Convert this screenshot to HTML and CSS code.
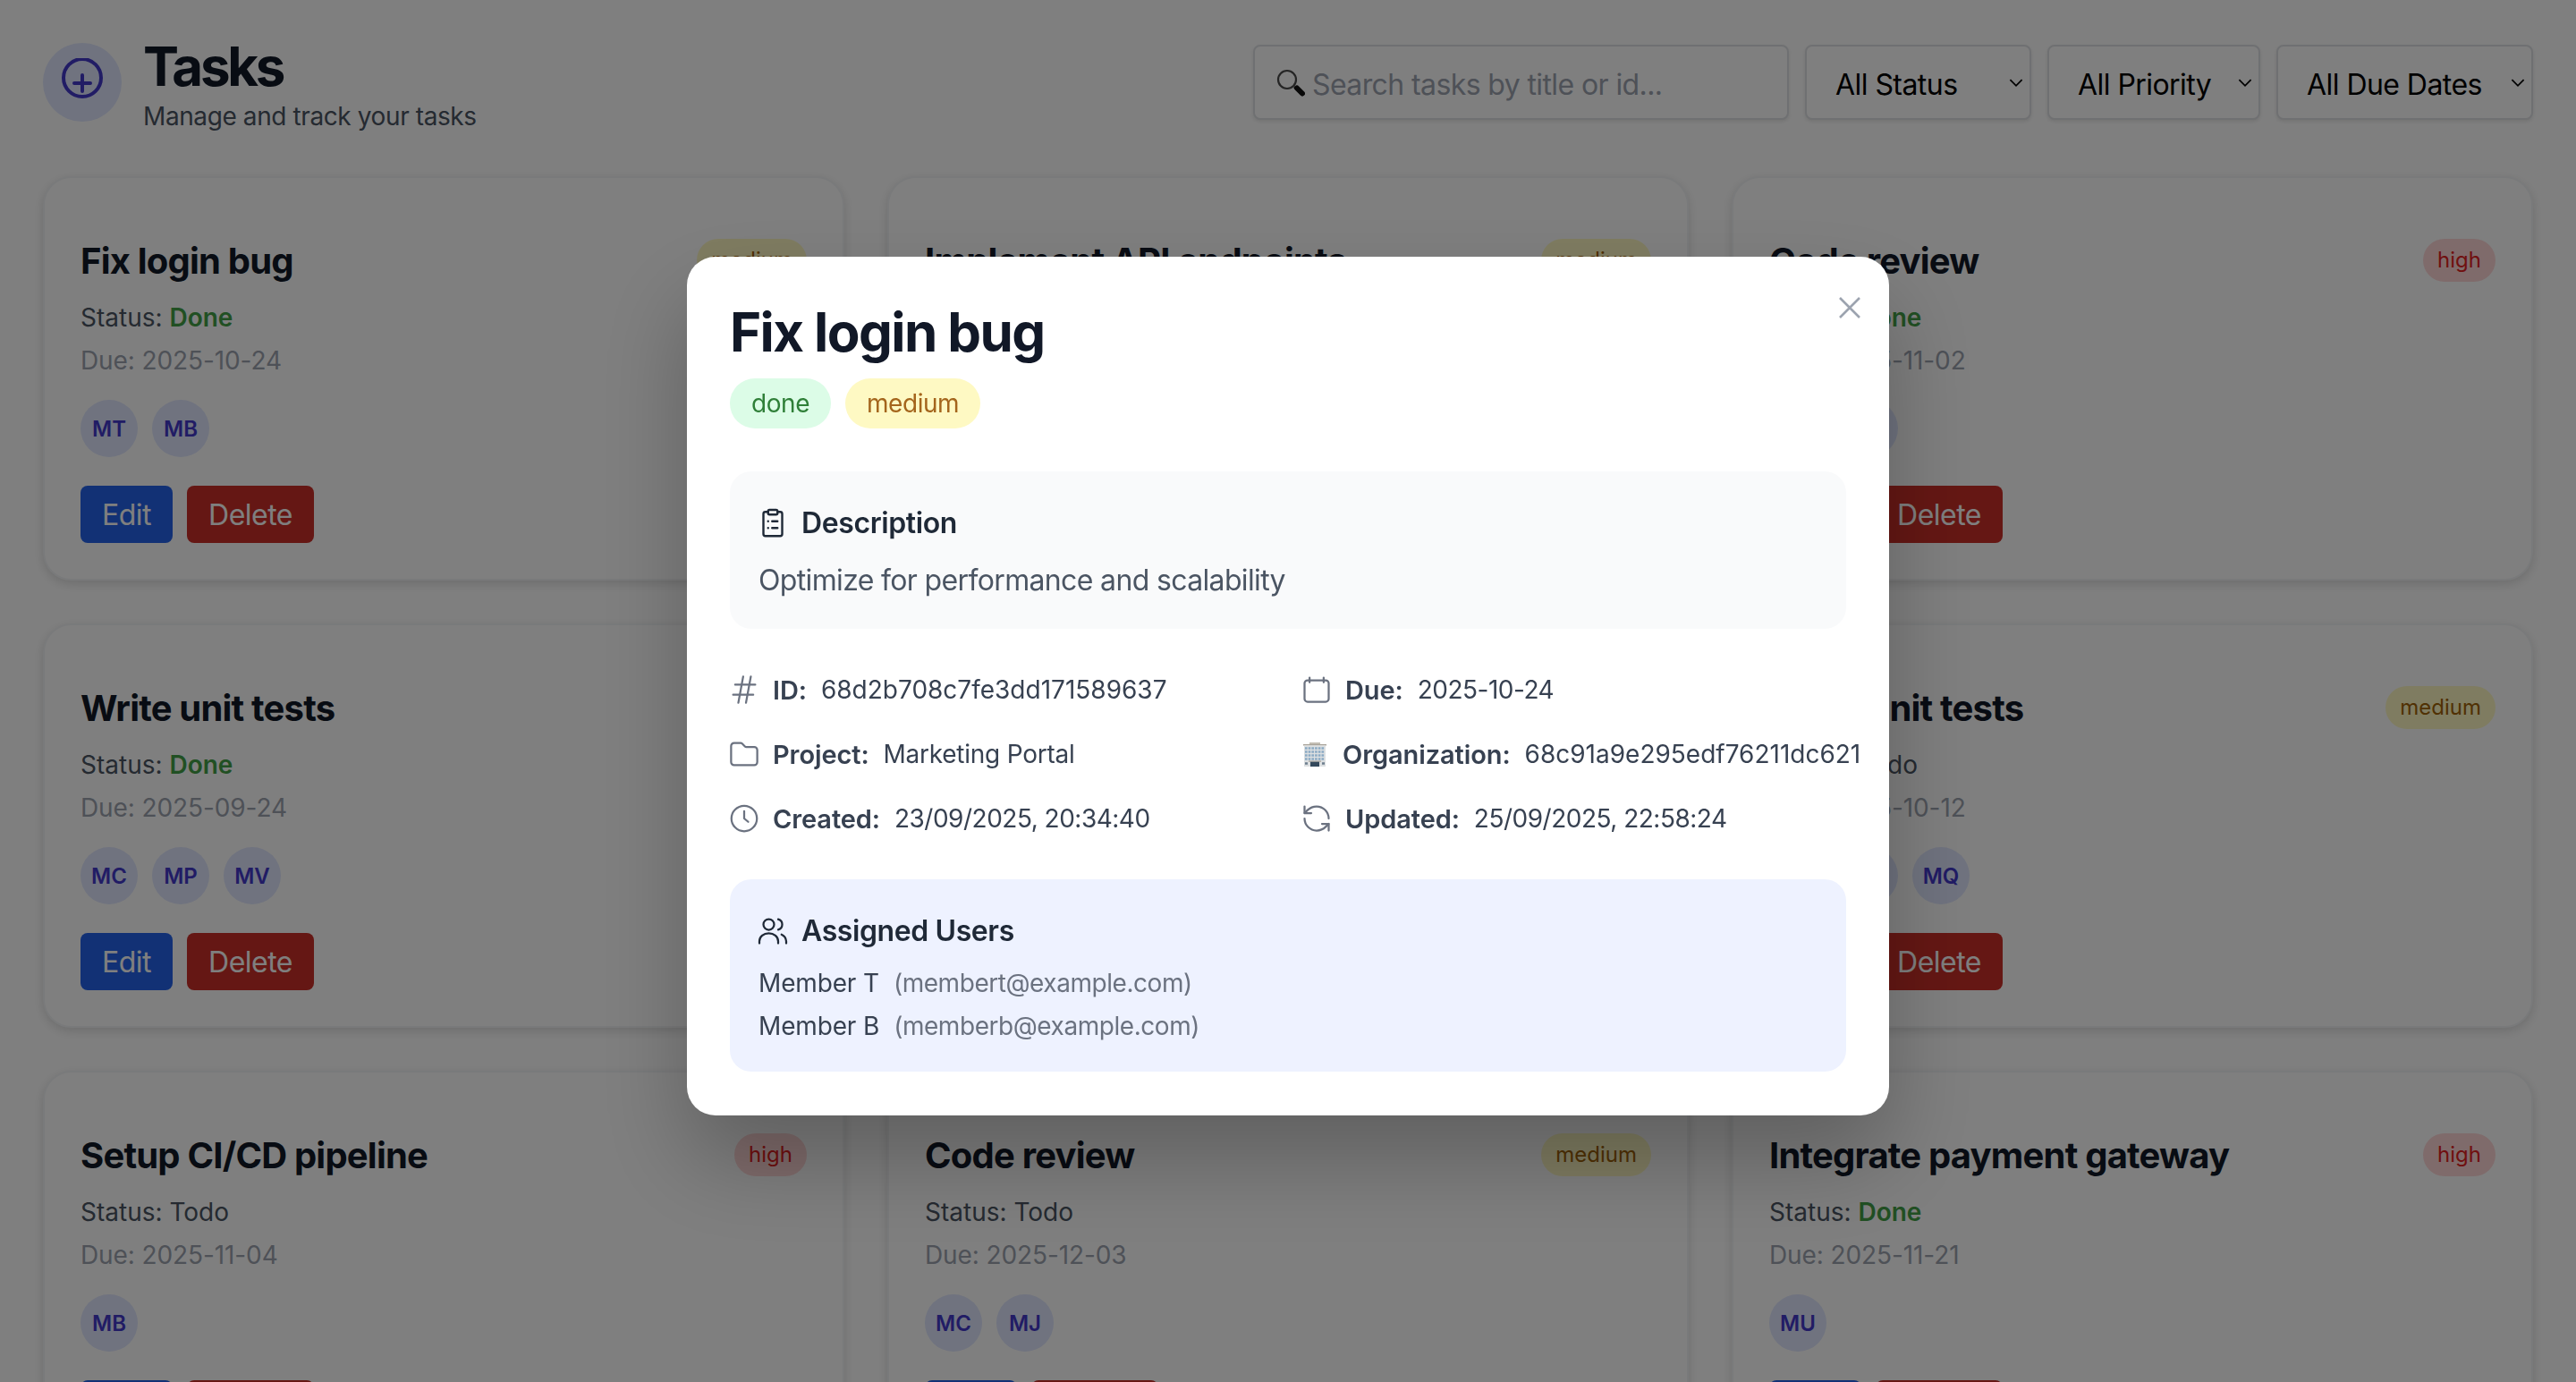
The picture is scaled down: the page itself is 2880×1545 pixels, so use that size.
FILE: index.html
```html
<!DOCTYPE html>
<html lang="en">
<head>
  <meta charset="UTF-8">
  <title>Tasks</title>
  <link rel="stylesheet" href="styles.css">
</head>
<body>
  <div class="page">
    <!-- Header -->
    <header class="header">
      <div class="brand">
        <div class="brand-icon">
          <svg class="brand-svg" viewBox="0 0 48 48" fill="none" stroke="currentColor" stroke-width="4" stroke-linecap="round">
            <circle cx="24" cy="22" r="21"/>
            <path d="M15 28h18M24 19v18"/>
          </svg>
        </div>
        <div class="brand-text">
          <h1>Tasks</h1>
          <p class="subtitle">Manage and track your tasks</p>
        </div>
      </div>
      <div class="filters">
        <div class="search">
          <svg class="search-icon" viewBox="0 0 32 32" fill="none">
            <circle cx="12" cy="12" r="10" stroke="#4a4a4a" stroke-width="2.2" fill="#fff" fill-opacity="0.08"/>
            <path d="M20 20l3 3" stroke="#333" stroke-width="2.5"/>
            <path d="M23 21.5l6 6" stroke="#111" stroke-width="6" stroke-linecap="round"/>
          </svg>
          <span>Search tasks by title or id...</span>
        </div>
        <div class="select select-status"><span>All Status</span><svg class="chev" viewBox="0 0 16 10" fill="none" stroke="currentColor" stroke-width="1.6"><path d="M2 2l6 6 6-6"/></svg></div>
        <div class="select select-priority"><span>All Priority</span><svg class="chev" viewBox="0 0 16 10" fill="none" stroke="currentColor" stroke-width="1.6"><path d="M2 2l6 6 6-6"/></svg></div>
        <div class="select select-due"><span>All Due Dates</span><svg class="chev" viewBox="0 0 16 10" fill="none" stroke="currentColor" stroke-width="1.6"><path d="M2 2l6 6 6-6"/></svg></div>
      </div>
    </header>

    <!-- Task cards -->
    <main class="grid">
      <div class="card">
        <div class="card-top"><h3>Fix login bug</h3><span class="badge medium">medium</span></div>
        <p class="status">Status: <b class="done">Done</b></p>
        <p class="due">Due: 2025-10-24</p>
        <div class="avatars"><span>MT</span><span>MB</span></div>
        <div class="actions"><button class="edit">Edit</button><button class="delete">Delete</button></div>
      </div>
      <div class="card">
        <div class="card-top"><h3>Implement API endpoints</h3><span class="badge medium">medium</span></div>
        <p class="status">Status: Todo</p>
        <p class="due">Due: 2025-10-30</p>
        <div class="avatars"><span>MC</span><span>MP</span></div>
        <div class="actions"><button class="edit">Edit</button><button class="delete">Delete</button></div>
      </div>
      <div class="card">
        <div class="card-top"><h3>Code review</h3><span class="badge high">high</span></div>
        <p class="status">Status: <b class="done">Done</b></p>
        <p class="due">Due: 2025-11-02</p>
        <div class="avatars"><span>MT</span><span>MV</span></div>
        <div class="actions"><button class="edit">Edit</button><button class="delete">Delete</button></div>
      </div>

      <div class="card">
        <div class="card-top"><h3>Write unit tests</h3><span class="badge medium">medium</span></div>
        <p class="status">Status: <b class="done">Done</b></p>
        <p class="due">Due: 2025-09-24</p>
        <div class="avatars"><span>MC</span><span>MP</span><span>MV</span></div>
        <div class="actions"><button class="edit">Edit</button><button class="delete">Delete</button></div>
      </div>
      <div class="card">
        <div class="card-top"><h3>Setup CI/CD pipeline</h3><span class="badge medium">medium</span></div>
        <p class="status">Status: Todo</p>
        <p class="due">Due: 2025-11-10</p>
        <div class="avatars"><span>MJ</span></div>
        <div class="actions"><button class="edit">Edit</button><button class="delete">Delete</button></div>
      </div>
      <div class="card">
        <div class="card-top"><h3>Write unit tests</h3><span class="badge medium">medium</span></div>
        <p class="status">Status: Todo</p>
        <p class="due">Due: 2025-10-12</p>
        <div class="avatars"><span>MB</span><span>MT</span><span>MQ</span></div>
        <div class="actions"><button class="edit">Edit</button><button class="delete">Delete</button></div>
      </div>

      <div class="card">
        <div class="card-top"><h3>Setup CI/CD pipeline</h3><span class="badge high">high</span></div>
        <p class="status">Status: Todo</p>
        <p class="due">Due: 2025-11-04</p>
        <div class="avatars"><span>MB</span></div>
        <div class="actions"><button class="edit">Edit</button><button class="delete">Delete</button></div>
      </div>
      <div class="card">
        <div class="card-top"><h3>Code review</h3><span class="badge medium">medium</span></div>
        <p class="status">Status: Todo</p>
        <p class="due">Due: 2025-12-03</p>
        <div class="avatars"><span>MC</span><span>MJ</span></div>
        <div class="actions"><button class="edit">Edit</button><button class="delete">Delete</button></div>
      </div>
      <div class="card">
        <div class="card-top"><h3>Integrate payment gateway</h3><span class="badge high">high</span></div>
        <p class="status">Status: <b class="done">Done</b></p>
        <p class="due">Due: 2025-11-21</p>
        <div class="avatars"><span>MU</span></div>
        <div class="actions"><button class="edit">Edit</button><button class="delete">Delete</button></div>
      </div>
    </main>
  </div>

  <!-- Task details modal -->
  <div class="overlay">
    <div class="modal">
      <svg class="close" viewBox="0 0 24 24" fill="none" stroke="currentColor" stroke-width="2.6"><path d="M1 1l22 22M23 1L1 23"/></svg>
      <h2>Fix login bug</h2>
      <div class="tags">
        <span class="tag tag-done">done</span>
        <span class="tag tag-medium">medium</span>
      </div>

      <section class="box box-desc">
        <h4>
          <svg class="icon" viewBox="0 0 24 24" fill="none" stroke="currentColor" stroke-width="1.6" stroke-linecap="round" stroke-linejoin="round">
            <rect x="8.5" y="2" width="7" height="3.5" rx="1"/>
            <path d="M15.5 3.500h2A1.500 1.500 0 0 1 19 5v15a1.500 1.500 0 0 1-1.500 1.500h-11A1.500 1.500 0 0 1 5 20V5a1.500 1.500 0 0 1 1.500-1.500h2"/>
            <path d="M11.500 10.500h4M11.500 15.500h4M8.500 10.500h.01M8.500 15.500h.01"/>
          </svg>
          <span>Description</span>
        </h4>
        <p class="desc">Optimize for performance and scalability</p>
      </section>

      <div class="meta">
        <div class="meta-row">
          <svg class="icon gray" viewBox="0 0 24 24" fill="none" stroke="currentColor" stroke-width="1.5" stroke-linecap="round"><path d="M5.250 8.250h15m-16.500 7.500h15m-1.800-13.500-3.600 19.500m-2.100-19.500-3.600 19.500"/></svg>
          <b>ID:</b><span>68d2b708c7fe3dd171589637</span>
        </div>
        <div class="meta-row">
          <svg class="icon gray" viewBox="0 0 24 24" fill="none" stroke="currentColor" stroke-width="1.5" stroke-linecap="round" stroke-linejoin="round"><path d="M6.750 3v3.500M17.250 3v3.500"/><rect x="3" y="5" width="18" height="16" rx="2.250"/></svg>
          <b>Due:</b><span class="date">2025-10-24</span>
        </div>
        <div class="meta-row">
          <svg class="icon gray" viewBox="0 0 24 24" fill="none" stroke="currentColor" stroke-width="1.5" stroke-linejoin="round"><path d="M2.250 6A2.250 2.250 0 0 1 4.500 3.750h4.900a1.500 1.500 0 0 1 1.060.440l2.100 2.120a1.500 1.500 0 0 0 1.060.440h5.880A2.250 2.250 0 0 1 21.750 9v9a2.250 2.250 0 0 1-2.250 2.250h-15A2.250 2.250 0 0 1 2.250 18Z"/></svg>
          <b>Project:</b><span class="project">Marketing Portal</span>
        </div>
        <div class="meta-row">
          <svg class="building" viewBox="0 0 26 27">
            <rect x="7" y="0" width="12" height="2.500" fill="#c2bdb3"/>
            <rect x="0" y="2" width="26" height="1.500" fill="#a8a298"/>
            <rect x="1" y="3.500" width="24" height="23.500" fill="#dcdfe1"/>
            <path d="M2 6.500h22M2 10.500h22M2 14.500h22M2 18.500h22" stroke="#8aaac4" stroke-width="2.600" stroke-dasharray="2.600 1.100"/>
            <rect x="6" y="20.500" width="14" height="1.200" fill="#a8a298"/>
            <rect x="8" y="21.700" width="10" height="5.300" fill="#34495c"/>
            <path d="M2 23.500h3M21 23.500h3" stroke="#6d7f8e" stroke-width="2.600"/>
          </svg>
          <b>Organization:</b><span>68c91a9e295edf76211dc621</span>
        </div>
        <div class="meta-row">
          <svg class="icon gray" viewBox="0 0 24 24" fill="none" stroke="currentColor" stroke-width="1.5" stroke-linecap="round" stroke-linejoin="round"><circle cx="12" cy="12" r="9.500"/><path d="M12 6.500V12l3 2.500"/></svg>
          <b>Created:</b><span class="date">23/09/2025, 20:34:40</span>
        </div>
        <div class="meta-row">
          <svg class="icon gray" viewBox="0 0 24 24" fill="none" stroke="currentColor" stroke-width="1.5" stroke-linecap="round" stroke-linejoin="round"><path d="M21 12a9 9 0 0 0-9-9 9.750 9.750 0 0 0-6.740 2.740L3 8"/><path d="M3 3v5h5"/><path d="M3 12a9 9 0 0 0 9 9 9.750 9.750 0 0 0 6.740-2.740L21 16"/><path d="M16 16h5v5"/></svg>
          <b>Updated:</b><span class="date">25/09/2025, 22:58:24</span>
        </div>
      </div>

      <section class="box box-users">
        <h4>
          <svg class="icon" viewBox="0 0 24 24" fill="none" stroke="currentColor" stroke-width="1.5" stroke-linecap="round"><circle cx="9" cy="7" r="4"/><path d="M2 21v-1.500a7 6 0 0 1 14 0V21"/><path d="M22 21v-1.500a6 6 0 0 0-3.500-5"/><path d="M16 3.130a4 4 0 0 1 0 7.750"/></svg>
          <span>Assigned Users</span>
        </h4>
        <p class="member"><span class="name">Member T</span><span class="mail">(membert@example.com)</span></p>
        <p class="member"><span class="name">Member B</span><span class="mail">(memberb@example.com)</span></p>
      </section>
    </div>
  </div>
</body>
</html>
```

FILE: styles.css
```css
* {
  box-sizing: border-box;
}
html, body {
  margin: 0;
  height: 100%;
  overflow: hidden;
}
body {
  font-family: Inter, "Liberation Sans", sans-serif;
  background: #ffffff;
  color: #111827;
}
h1, h2, h3, h4, p {
  margin: 0;
}

.page {
  padding: 36px 48px;
}
.header {
  display: flex;
  justify-content: space-between;
  align-items: center;
  height: 112px;
  margin-bottom: 49px;
}
.brand {
  display: flex;
  align-items: center;
  gap: 24px;
}
.brand-icon {
  width: 88px;
  height: 88px;
  border-radius: 50%;
  background: #e0e7ff;
  color: #4338ca;
  display: flex;
  justify-content: center;
  padding-top: 17px;
}
.brand-svg {
  width: 48px;
  height: 48px;
}
.brand-text {
  padding-top: 4px;
}
h1 {
  font-size: 60px;
  line-height: 72px;
  font-weight: 700;
  letter-spacing: -3.300px;
}
.subtitle {
  font-size: 28px;
  line-height: 40px;
  letter-spacing: -0.400px;
  color: #4b5563;
}

.filters {
  display: flex;
  gap: 18px;
}
.search, .select {
  height: 84px;
  border: 2px solid #dfe1e4;
  border-radius: 8px;
  box-shadow: 0 2px 4px rgba(0, 0, 0, 0.1);
  background: #fff;
  display: flex;
  align-items: center;
  font-size: 32px;
  letter-spacing: -0.550px;
}
.search span, .select span {
  padding-top: 4px;
}
.search {
  width: 599px;
  padding-left: 24px;
  gap: 8px;
  letter-spacing: -0.600px;
  color: #9ca3af;
}
.search-icon {
  width: 32px;
  height: 32px;
  margin-top: 2px;
}
.select {
  justify-content: space-between;
  padding: 0 6px 0 32px;
  color: #000;
}
.select-status { width: 253px; }
.select-priority { width: 238px; }
.select-due { width: 287px; }
.chev {
  width: 18px;
  height: 11px;
}

.grid {
  display: grid;
  grid-template-columns: repeat(3, 1fr);
  gap: 48px;
}
.card {
  border: 2px solid #f3f4f6;
  border-radius: 32px;
  box-shadow: 0 4px 12px rgba(0, 0, 0, 0.14);
  padding: 62px 40px 40px;
  background: #fff;
}
.card-top {
  display: flex;
  justify-content: space-between;
  align-items: center;
  height: 60px;
  margin-bottom: 10px;
}
h3 {
  font-size: 40px;
  font-weight: 700;
  letter-spacing: -0.800px;
  color: #111827;
}
.badge {
  height: 48px;
  line-height: 48px;
  padding: 0 16px;
  border-radius: 24px;
  font-size: 24px;
}
.badge.medium {
  background: #fef9c3;
  color: #a16207;
}
.badge.high {
  background: #fed7d7;
  color: #e02020;
}
.status {
  font-size: 28px;
  line-height: 48px;
  color: #4b5563;
}
.done {
  font-weight: 600;
  color: #43a047;
}
.due {
  font-size: 28px;
  line-height: 48px;
  letter-spacing: -0.100px;
  color: #9ca3af;
}
.avatars {
  display: flex;
  gap: 16px;
  margin: 20px 0 32px;
}
.avatars span {
  width: 64px;
  height: 64px;
  border-radius: 50%;
  background: #e0e7ff;
  color: #4338ca;
  font-size: 24px;
  font-weight: 600;
  display: flex;
  align-items: center;
  justify-content: center;
}
.actions {
  display: flex;
  gap: 16px;
}
button {
  height: 64px;
  padding: 0 24px;
  border: none;
  border-radius: 8px;
  color: #fff;
  font-family: inherit;
  font-size: 32px;
  letter-spacing: -0.500px;
}
button.edit { background: #2563eb; }
button.delete { background: #ca2f28; }

.overlay {
  position: fixed;
  inset: 0;
  background: rgba(0, 0, 0, 0.5);
  backdrop-filter: blur(0.5px);
  display: flex;
  justify-content: center;
  padding-top: 287px;
}
.modal {
  position: relative;
  width: 1344px;
  height: 960px;
  padding: 48px;
  border-radius: 32px;
  background: #fff;
  box-shadow: 0 50px 100px rgba(0, 0, 0, 0.25);
}
.close {
  position: absolute;
  top: 45px;
  right: 32px;
  width: 24px;
  height: 24px;
  color: #9ca3af;
}
h2 {
  font-size: 60px;
  line-height: 72px;
  font-weight: 700;
  letter-spacing: -1.600px;
}
.tags {
  display: flex;
  gap: 16px;
  margin-top: 16px;
}
.tag {
  height: 56px;
  line-height: 56px;
  padding: 0 24px;
  border-radius: 28px;
  font-size: 28px;
  letter-spacing: -0.450px;
}
.tag-done {
  background: #dcfce7;
  color: #2f7f38;
}
.tag-medium {
  background: #fef9c3;
  color: #a4651c;
}

.box {
  border-radius: 24px;
  padding: 34px 32px 32px;
}
.box h4 {
  display: flex;
  align-items: center;
  gap: 14px;
  font-size: 32px;
  line-height: 48px;
  font-weight: 600;
  letter-spacing: -0.400px;
  color: #1f2937;
}
.box h4 .icon {
  margin-left: -2px;
}
.icon {
  width: 36px;
  height: 36px;
  flex: none;
}
.gray {
  color: #6b7280;
}
.box-desc {
  background: #f9fafb;
  margin-top: 48px;
  height: 176px;
}
.desc {
  margin-top: 16px;
  font-size: 32px;
  line-height: 48px;
  letter-spacing: -0.650px;
  color: #4b5563;
}

.meta {
  display: grid;
  grid-template-columns: 608px 608px;
  column-gap: 32px;
  row-gap: 32px;
  margin-top: 48px;
}
.meta-row {
  display: flex;
  align-items: center;
  height: 40px;
  font-size: 28px;
  color: #374151;
  white-space: nowrap;
}
.meta-row .icon {
  margin: 0 14px 0 -2px;
}
.meta-row b {
  font-size: 29px;
  font-weight: 600;
  letter-spacing: -0.100px;
  margin-right: 16px;
}
.date {
  letter-spacing: -0.500px;
}
.project {
  letter-spacing: -0.250px;
}
.building {
  flex: none;
  width: 26px;
  height: 27px;
  margin: 0 18px 0 1px;
}
.box-users {
  background: #eef2ff;
  margin-top: 48px;
  height: 215px;
}
.member {
  font-size: 28px;
  line-height: 48px;
  color: #374151;
  display: flex;
  gap: 16px;
}
.box-users h4 {
  margin-bottom: 10px;
}
.name {
  letter-spacing: -0.150px;
}
.mail {
  letter-spacing: -0.450px;
  color: #6b7280;
}
```
